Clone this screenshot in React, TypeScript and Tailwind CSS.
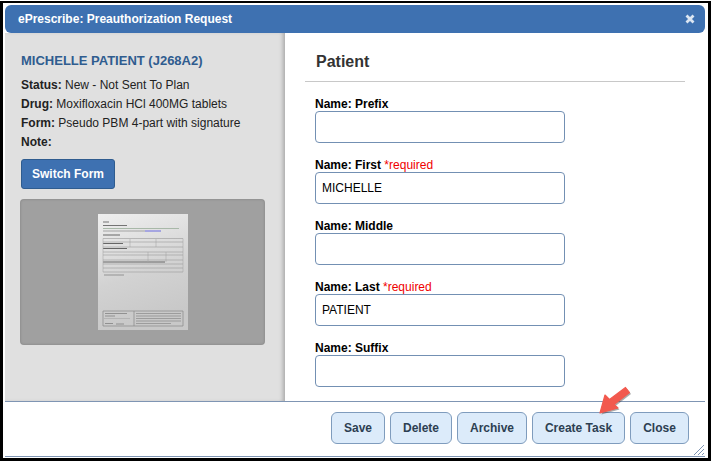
import React from "react";

const font = { fontFamily: '"Liberation Sans", Arial, sans-serif' };

function Field({ label, required, value }: { label: string; required?: boolean; value?: string }) {
  return (
    <div className="flex flex-col h-[61px]">
      <div className="h-[15px] text-[12px] leading-[17px] font-bold text-black whitespace-nowrap">
        {label}
        {required && <span className="font-normal text-[#f00000]"> *required</span>}
      </div>
      <div className="w-[250px] h-[32px] rounded-[4px] border border-[#7390b3] bg-white px-[6px] text-[12px] leading-[30px] text-black">
        {value}
      </div>
    </div>
  );
}

function Btn({ children, w }: { children: React.ReactNode; w: string }) {
  return (
    <div className={`${w} h-[32px] rounded-[6px] border border-[#7f9cbd] bg-[#dcebfa] text-center text-[12px] leading-[30px] font-bold text-[#2d3f52]`}>
      {children}
    </div>
  );
}

function Doc() {
  const rows = [24.5, 28, 33, 38, 41, 46, 50, 54, 58];
  return (
    <svg width="90" height="116" viewBox="0 0 90 116" className="block">
      <defs>
        <linearGradient id="pg" x1="0" y1="0" x2="0.25" y2="1">
          <stop offset="0" stopColor="#efefef" />
          <stop offset="0.6" stopColor="#d2d2d2" />
          <stop offset="1" stopColor="#c8c8c8" />
        </linearGradient>
        <filter id="bl"><feGaussianBlur stdDeviation="0.55" /></filter>
      </defs>
      <rect width="90" height="116" fill="url(#pg)" />
      <g filter="url(#bl)" stroke="#666" strokeWidth="0.7" fill="none">
        <path d="M5 8h6M5 11.500h24" strokeWidth="0.900" />
        <path d="M5 14.500h76" stroke="#a8b8a8" strokeWidth="1.200" />
        <path d="M5 17h42" stroke="#888" />
        <path d="M47 17h16" stroke="#6a6ae0" strokeWidth="1" />
        <path d="M5 21h17M5 29.500h20M5 34.500h24M5 48h62" strokeWidth="1" stroke="#666" />
        {rows.map((y) => (
          <path key={y} d={`M5 ${y}H85`} stroke="#999" strokeWidth="0.600" />
        ))}
        <path d="M5 24.500V58M85 24.500V58" stroke="#aaa" strokeWidth="0.600" />
        <path d="M32 25v8M58 25v8M50 38v10M68 38v10" stroke="#aaa" strokeWidth="0.600" />
        <path d="M6 61h20" stroke="#777" />
        <path d="M5 97H85V112H5Z" stroke="#888" />
        <path d="M36 97V112" stroke="#888" />
        <path d="M38 99.500h45M38 102h45M38 104.500h45M38 107h45M38 109.500h35" stroke="#888" />
        <path d="M7 99.500h22M7 102h10M7 109.500h8M18 110h8" stroke="#777" />
        <path d="M6 104.500h26" stroke="#aaa" />
      </g>
    </svg>
  );
}

export default function App() {
  return (
    <div className="w-[711px] h-[462px] bg-white pt-px overflow-hidden" style={font}>
      <div className="w-[711px] h-[460px] border-[3px] border-t-[2px] border-black pt-[2px] pl-[2px] pr-[3px] pb-[1px] bg-white">
        <div className="h-full flex flex-col">
          <div className="h-[28px] shrink-0 rounded-[6px] bg-[#3e71b1] flex items-center justify-between pl-[13px] pr-[10px] text-white">
            <span className="text-[12px] font-bold">ePrescribe: Preauthorization Request</span>
            <svg width="10" height="10" viewBox="0 0 10 10">
              <path d="M1.500 1.500L8.500 8.500M8.500 1.500L1.500 8.500" stroke="#dce6f2" strokeWidth="2.800" />
            </svg>
          </div>
          <div className="flex h-[368px] shrink-0">
            <div className="w-[280px] shrink-0 bg-[#e0e0e0] shadow-[inset_-4px_0_4px_-2px_rgba(0,0,0,0.25)] pl-[16px] pr-[20px] pt-[20px] text-[#222]">
              <div className="text-[13px] leading-[16px] font-bold text-[#2f5c8f] whitespace-nowrap">MICHELLE PATIENT (J268A2)</div>
              <div className="mt-[7px] text-[12px] leading-[19px] whitespace-nowrap">
                <div><b>Status:</b> New - Not Sent To Plan</div>
                <div><b>Drug:</b> Moxifloxacin HCl 400MG tablets</div>
                <div><b>Form:</b> Pseudo PBM 4-part with signature</div>
                <div><b>Note:</b></div>
              </div>
              <div className="mt-[7px] w-[94px] h-[30px] rounded-[3px] bg-[#3e71b1] border border-[#2f5c8f] text-center text-white text-[12px] leading-[28px] font-bold">
                Switch Form
              </div>
              <div className="mt-[10px] -ml-px w-[245px] h-[146px] rounded-[4px] bg-[#a0a0a0] shadow-[inset_0_0_3px_rgba(0,0,0,0.2)] flex justify-center pt-[15px]">
                <Doc />
              </div>
            </div>
            <div className="flex-1 bg-white pl-[20px] pt-[19px]">
              <div className="w-[380px] h-[30px] border-b border-[#c8c8c8] pl-[11px] text-[16px] leading-[20px] font-bold text-[#333]">Patient</div>
              <div className="pl-[10px] pt-[14px]">
                <Field label="Name: Prefix" />
                <Field label="Name: First" required value="MICHELLE" />
                <Field label="Name: Middle" />
                <Field label="Name: Last" required value="PATIENT" />
                <Field label="Name: Suffix" />
              </div>
            </div>
          </div>
          <div className="relative flex-1 border-t border-b border-t-[#7f95b3] border-b-[#7f95b3] bg-white flex justify-end items-start gap-[5px] pr-[16px] pt-[10px]">
            <Btn w="w-[54px]">Save</Btn>
            <Btn w="w-[62px]">Delete</Btn>
            <Btn w="w-[70px]">Archive</Btn>
            <Btn w="w-[93px]">Create Task</Btn>
            <Btn w="w-[59px]">Close</Btn>
            <svg className="absolute left-[585px] top-[-20px]" width="50" height="40" viewBox="0 0 50 40">
              <path d="M10 31L15 13L19.500 17.500L35.500 5.500L39.500 10.500L24 22.500L28 26Z" fill="#444" opacity="0.45" transform="translate(1.500 1.500)" />
              <path d="M10 31L15 13L19.500 17.500L35.500 5.500L39.500 10.500L24 22.500L28 26Z" fill="#f2594e" stroke="#f2594e" strokeWidth="1.200" strokeLinejoin="round" />
            </svg>
            <svg className="absolute right-0 bottom-0" width="12" height="12" viewBox="0 0 12 12">
              <path d="M1 11L11 1M5 11L11 5M9 11L11 9" stroke="#7f95b3" strokeWidth="1" />
            </svg>
          </div>
        </div>
      </div>
    </div>
  );
}
